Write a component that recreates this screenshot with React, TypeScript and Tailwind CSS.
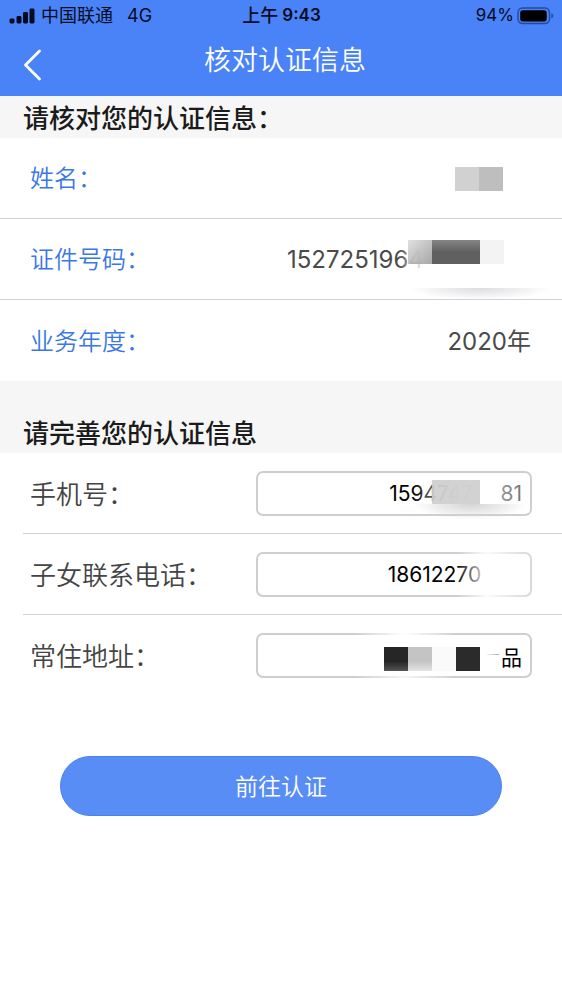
import { useState, type ReactNode } from 'react';

function StatusBar() {
  return (
    <div className="grid h-[31px] grid-cols-[1fr_auto_1fr] items-center pl-[9px] pr-2 text-[18px] leading-[31px] text-[#050b1e]">
      <div className="flex items-center">
        <svg width="26" height="16" viewBox="0 0 26 16" fill="currentColor" aria-label="信号">
          <rect x="0.5" y="10.5" width="5" height="5" rx="1.4" />
          <rect x="7.500" y="8" width="5" height="7.5" rx="1.4" />
          <rect x="14" y="4" width="5" height="11.5" rx="1.4" />
          <rect x="20.500" y="0.5" width="5" height="15" rx="1.4" />
        </svg>
        <span className="ml-1.5">中国联通</span>
        <span className="ml-3.5">4G</span>
      </div>
      <span className="flex gap-1 font-medium">
        上午<span className="text-[17px] font-semibold">9:43</span>
      </span>
      <div className="flex items-center justify-end gap-[3px]">
        <span className="text-[17px]">94%</span>
        <svg width="37" height="18" viewBox="0 0 37 18" aria-label="电量">
          <rect x="1" y="1" width="31.5" height="15.5" rx="4.5" fill="none" stroke="#244a9c" strokeWidth="1.4" />
          <rect x="3.2" y="3.2" width="26.5" height="11.2" rx="2.6" fill="#000" />
          <path d="M34.3 6.2c1.4.4 2 1.400 2 2.600s-.6 2.200-2 2.600z" fill="#244a9c" />
        </svg>
      </div>
    </div>
  );
}

function InfoRow({ label, children }: { label: string; children: ReactNode }) {
  return (
    <div className="relative flex h-[81px] items-center justify-between border-b border-[#d2d2d4] pl-[30px] pr-[31px] pt-0.5 last:border-b-0">
      <dt className="text-[24px] font-[350] text-[#3a78e6]">{label}</dt>
      <dd className="text-[24px] text-[#4a4a4a]">{children}</dd>
    </div>
  );
}

function FormRow({
  id,
  label,
  initial,
  children,
}: {
  id: string;
  label: string;
  initial: string;
  children: ReactNode;
}) {
  const [value, setValue] = useState(initial);
  return (
    <div className="flex h-[81px] items-center justify-between pl-[7px] pr-[30px]">
      <label htmlFor={id} className="pt-0.5 text-[26px] font-[350] text-[#444]">
        {label}
      </label>
      <div className="relative w-[55%]">
        <input
          id={id}
          value={value}
          onChange={(e) => setValue(e.target.value)}
          className="block h-[45px] w-full rounded-[7px] border-2 border-[#cecece] bg-white px-2 text-right text-[21px] text-black outline-none"
        />
        {children}
      </div>
    </div>
  );
}

export default function App() {
  return (
    <div className="min-h-screen bg-white font-['Inter','Noto_Sans_CJK_SC',sans-serif]">
      <header className="bg-[#4a83f7]">
        <StatusBar />
        <div className="grid h-[65px] grid-cols-[68px_1fr_60px] pt-[7px]">
          <button type="button" aria-label="返回" className="flex h-[54px] items-center pl-[23px] text-white">
            <svg width="19" height="32" viewBox="0 0 19 32" fill="none" stroke="currentColor" strokeWidth="2.800" strokeLinecap="round" strokeLinejoin="round">
              <path d="M16.500 2 2.500 16l14 14" />
            </svg>
          </button>
          <h1 className="text-center text-[27px] font-[350] leading-[45px] text-white">核对认证信息</h1>
        </div>
      </header>

      <main>
        <h2 className="h-[42px] bg-[#f6f6f7] pl-[23px] text-[26px] font-medium leading-[45px] text-[#1b1b1b]">
          请核对您的认证信息：
        </h2>
        <dl>
          <InfoRow label="姓名：">
            <span className="mr-7 flex h-6 w-12" aria-label="已遮挡">
              <span className="flex-1 bg-[#d1d1d1]" />
              <span className="flex-1 bg-[#bebebe]" />
            </span>
          </InfoRow>
          <InfoRow label="证件号码：">
            <span className="flex w-[244px]">1527251964</span>
            <span className="absolute right-[34px] top-[18px] flex h-9 w-[130px] bg-linear-to-r from-transparent to-white to-20%" />
            <span className="absolute right-[58px] top-[21px] flex h-6 w-24">
              <span className="flex-1 bg-linear-to-br from-[#dededeee] to-[#929292cc]" />
              <span className="flex-2 bg-linear-to-b from-[#858585] via-[#606060] to-[#606060]" />
              <span className="flex-1 bg-[#f3f3f3]" />
            </span>
            <span className="absolute right-2.5 top-[69px] h-3 w-36 bg-[radial-gradient(ellipse_at_top,#dcdce0,transparent_70%)]" />
          </InfoRow>
          <InfoRow label="业务年度：">2020年</InfoRow>
        </dl>

        <h2 className="h-[72px] bg-[#f6f6f7] pl-[23px] pt-[31px] text-[26px] font-medium leading-[43px] text-[#1b1b1b]">
          请完善您的认证信息
        </h2>
        <form onSubmit={(e) => e.preventDefault()}>
          <div className="ml-[23px] divide-y divide-[#d2d2d4]">
            <FormRow id="phone" label="手机号：" initial={'1594747\u2007\u200781'}>
              <span className="pointer-events-none absolute right-0.5 top-1.5 h-9 w-[118px] bg-linear-to-r from-transparent via-white/90 via-40% to-white/40" />
              <span className="pointer-events-none absolute right-[52px] top-[9px] h-6 w-12 bg-[#cdcdcde6]" />
              <span className="pointer-events-none absolute right-1 top-[33px] h-4 w-[116px] bg-[radial-gradient(ellipse_at_top,#d4d4d4,transparent_70%)]" />
            </FormRow>
            <FormRow id="family-phone" label="子女联系电话：" initial={'18612270\u2007\u2007\u2007'}>
              <span className="pointer-events-none absolute -top-px right-0 h-[47px] w-[76px] bg-linear-to-r from-transparent via-white/90 via-40% to-white/20" />
            </FormRow>
            <FormRow id="address" label="常住地址：" initial="品">
              <span className="pointer-events-none absolute -top-px right-[76px] h-1 w-[102px] bg-linear-to-r from-transparent via-white to-transparent" />
              <span className="pointer-events-none absolute bottom-0 right-[76px] h-0.5 w-[102px] bg-linear-to-r from-transparent via-white/80 to-transparent" />
              <span className="pointer-events-none absolute right-[52px] top-[14px] flex h-6 w-24">
                <span className="flex-1 bg-linear-to-b from-[#262626] from-60% to-[#555]" />
                <span className="flex-1 bg-linear-to-b from-[#c4c4c4] from-60% to-[#e4e4e4]" />
                <span className="flex-1 bg-[#fafafa]" />
                <span className="flex-1 bg-[#2b2b2b]" />
              </span>
              <span className="pointer-events-none absolute right-[33px] top-[21px] h-px w-3.5 bg-linear-to-r from-transparent to-[#aaa]" />
            </FormRow>
          </div>
          <div className="px-[60px] pt-[60px]">
            <button type="submit" className="h-[60px] w-full rounded-full border border-[#4b82ea] bg-[#588df5] pt-0.5 text-[23px] font-[350] text-white">
              前往认证
            </button>
          </div>
        </form>
      </main>
    </div>
  );
}
